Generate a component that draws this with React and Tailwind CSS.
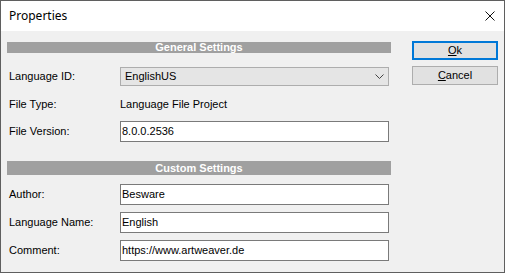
// Properties dialog
const font = { fontFamily: '"Liberation Sans", Arial, sans-serif' };

const Field = ({ label, value }) => (
  <div className="flex items-center h-[21px]">
    <span className="w-[113px] pl-[2px]">{label}</span>
    <div className="w-[269px] h-[21px] bg-white border border-[#7a7a7a] flex items-center pl-[1px]">
      {value}
    </div>
  </div>
);

const SectionBar = ({ title, className }) => (
  <div
    className={`bg-[#a0a0a0] text-white font-bold flex items-center justify-center leading-none ${className}`}
  >
    {title}
  </div>
);

const App = () => {
  return (
    <div className="w-[506px] h-[273px] bg-white" style={font}>
      <div className="w-[505px] h-[273px] border border-[#5f5f5f] flex flex-col text-[11px] text-black">
        {/* Title bar */}
        <div className="h-[30px] bg-white flex items-center justify-between shrink-0">
          <span
            className="pl-[8px] text-[12px] pb-[1px]"
            style={{ fontFamily: '"Noto Sans", "Open Sans", sans-serif' }}
          >
            Properties
          </span>
          <svg width="10" height="10" viewBox="0 0 10 10" className="mr-[9px] mb-[1px]">
            <path d="M0.5 0.5 L9.5 9.5 M9.5 0.5 L0.5 9.5" stroke="#111" strokeWidth="1" />
          </svg>
        </div>

        {/* Body */}
        <div className="flex-1 bg-[#f0f0f0] flex pl-[6px] pr-[6px]">
          <div className="w-[384px] flex flex-col pt-[11px]">
            <SectionBar title="General Settings" className="h-[11px]" />

            <div className="flex items-center h-[19px] mt-[14px]">
              <span className="w-[113px] pl-[2px]">Language ID:</span>
              <div className="w-[269px] h-[19px] bg-[#e5e5e5] border border-[#adadad] flex items-center justify-between pl-[4px] pr-[4px]">
                <span>EnglishUS</span>
                <svg width="9" height="5" viewBox="0 0 9 5">
                  <path d="M0.5 0.5 L4.5 4.5 L8.5 0.5" stroke="#444" strokeWidth="1" fill="none" />
                </svg>
              </div>
            </div>

            <div className="flex items-center h-[18px] mt-[9px]">
              <span className="w-[113px] pl-[2px]">File Type:</span>
              <span>Language File Project</span>
            </div>

            <div className="mt-[8px]">
              <Field label="File Version:" value="8.0.0.2536" />
            </div>

            <SectionBar title="Custom Settings" className="h-[14px] mt-[19px]" />

            <div className="flex flex-col gap-[7px] mt-[9px]">
              <Field label="Author:" value="Besware" />
              <Field label="Language Name:" value="English" />
              <Field label="Comment:" value="https://www.artweaver.de" />
            </div>
          </div>

          {/* Buttons */}
          <div className="ml-[21px] flex flex-col gap-[6px] pt-[10px]">
            <button className="w-[86px] h-[19px] bg-[#e1e1e1] border-2 border-[#0078d7] flex items-center justify-center leading-none">
              <span>
                <span className="underline">O</span>k
              </span>
            </button>
            <button className="w-[86px] h-[19px] bg-[#e1e1e1] border border-[#adadad] flex items-center justify-center leading-none">
              <span>
                <span className="underline">C</span>ancel
              </span>
            </button>
          </div>
        </div>
      </div>
    </div>
  );
};

export default App;
